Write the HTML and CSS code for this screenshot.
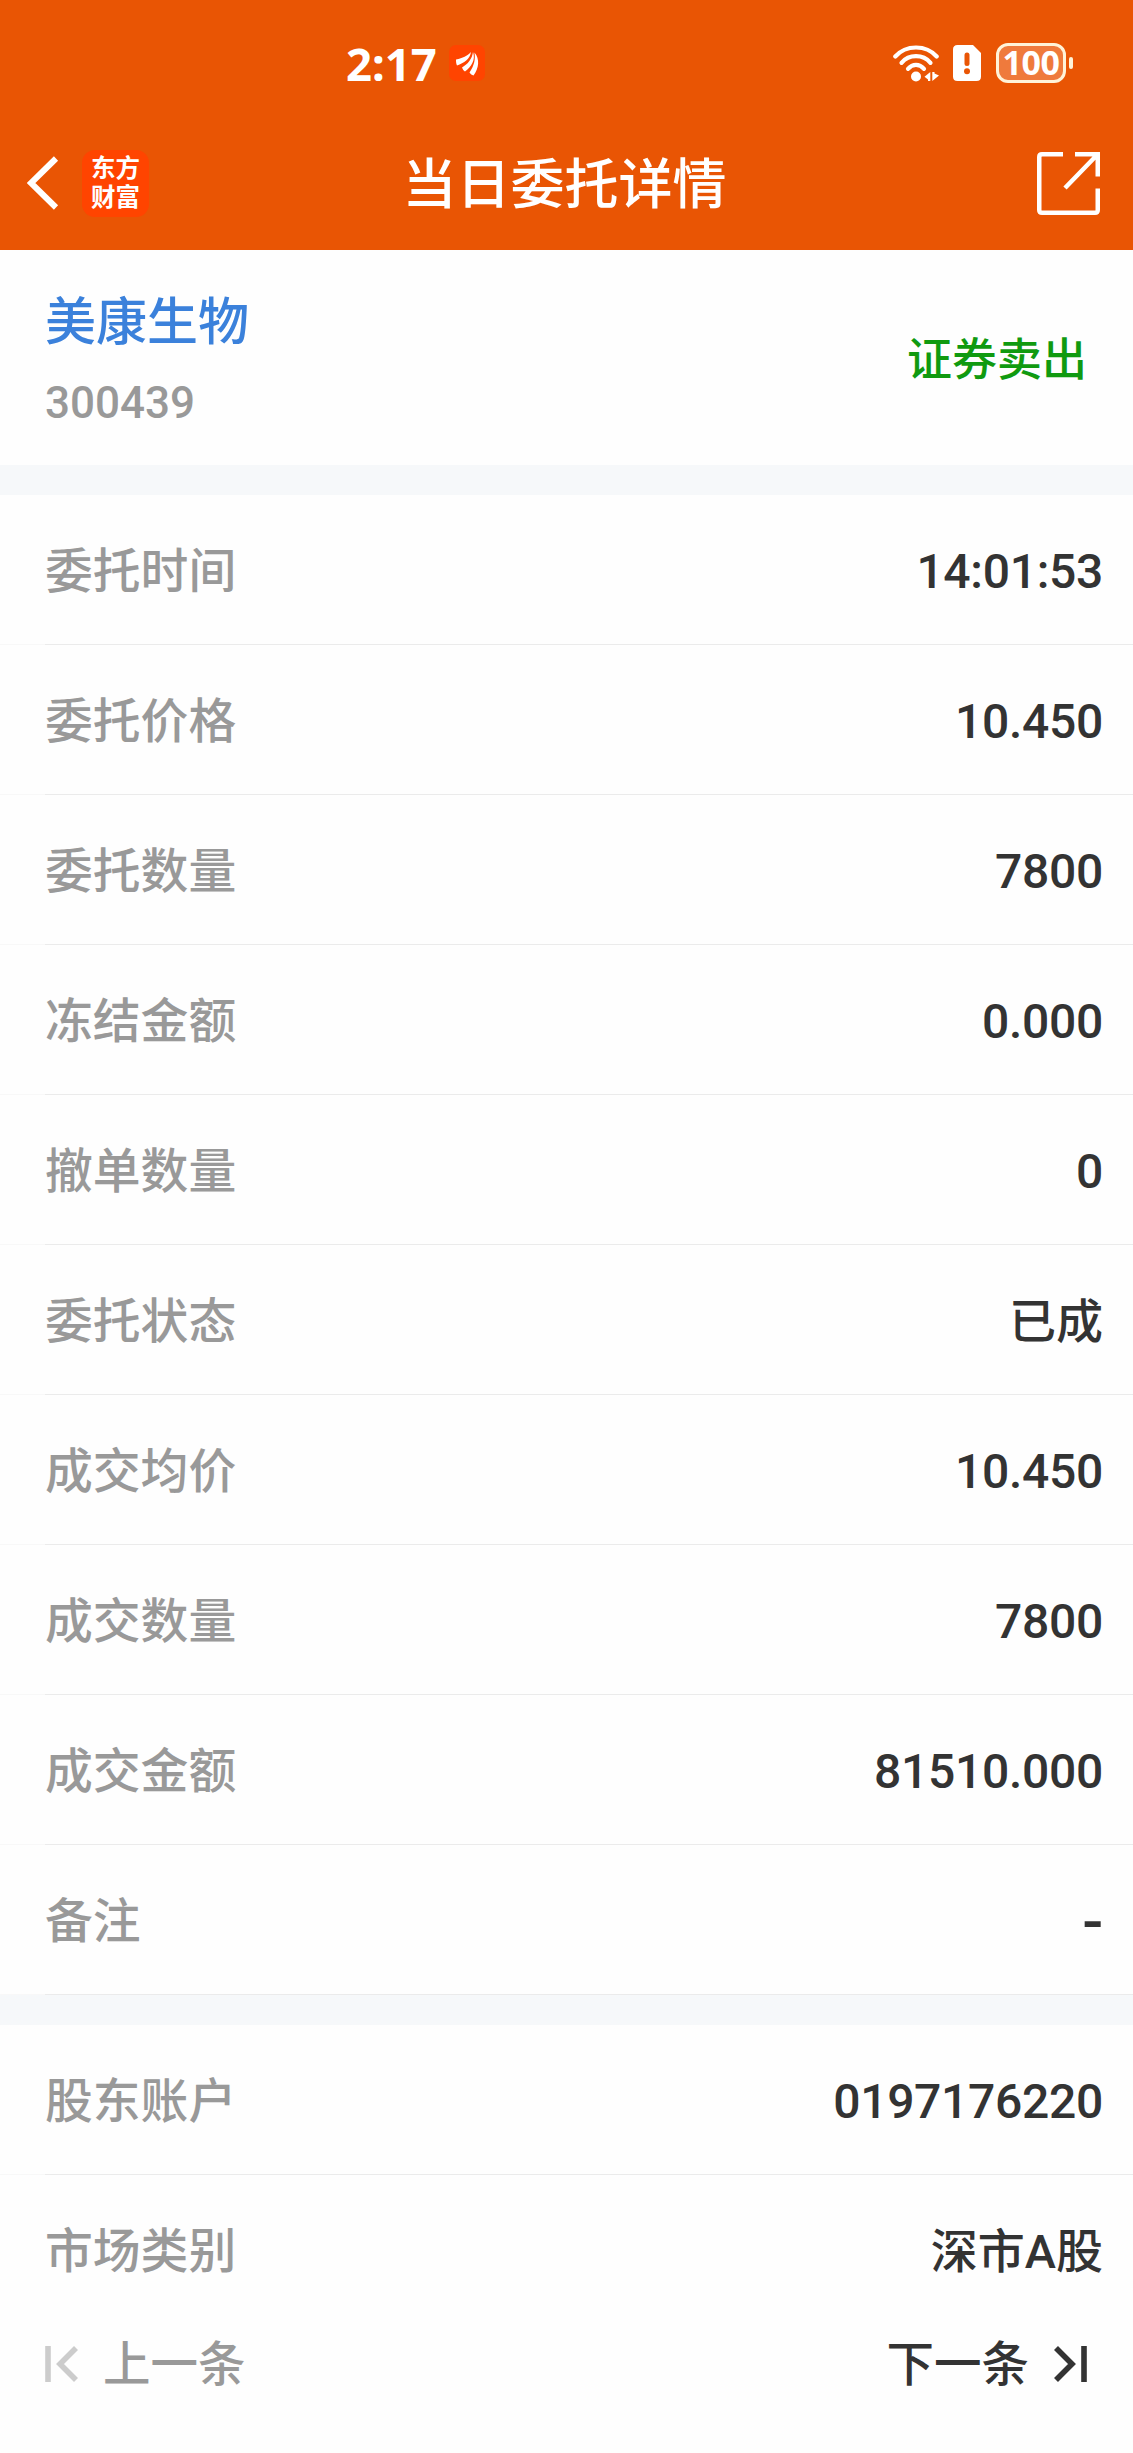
FILE: index.html
```html
<!DOCTYPE html>
<html lang="zh-CN">
<head>
    <meta charset="UTF-8">
    <meta name="viewport" content="width=device-width, initial-scale=1.0">
    <title>当日委托详情</title>
    <link rel="stylesheet" href="styles.css">
</head>
<body>
    <header class="header">
        <div class="status-bar">
            <div class="status-left">
                <span class="time">2:17</span>
                <svg class="app-icon" width="36" height="36" viewBox="0 0 36 36">
                    <rect width="36" height="36" rx="7" fill="#ff4400"/>
                    <path d="M7 14.500C14 13 18 11 22 7C21 14 15 18 8 20.500C7 18.500 7 16.500 7 14.500Z" fill="#fff"/>
                    <path d="M13 22.500C19 19 23 14 24 7C27 15 22 22 16 26.500C14.500 25.500 13.500 24 13 22.500Z" fill="#fff"/>
                    <path d="M20.500 27.500C25.500 20 26.500 14 25.500 7.500C31 14 30 23 24.500 30.500C23 30 21.500 29 20.500 27.500Z" fill="#fff"/>
                </svg>
            </div>
            <div class="status-right">
                <svg class="wifi" width="46" height="37" viewBox="0 0 46 37">
                    <g fill="none" stroke="#fff" stroke-width="4.200" stroke-linecap="round">
                        <path d="M2.300 11.500C13 -0.500 33 -0.500 43.700 11.500"/>
                        <path d="M8.500 17.800C16 9 30 9 37.500 17.800"/>
                        <path d="M15 23.800C19.500 18.500 26.500 18.500 31 23.800"/>
                    </g>
                    <circle cx="23" cy="31.500" r="5" fill="#fff"/>
                    <path d="M37.300 27V36H35V34.500L31.500 31.800ZM39.300 27H41.500V28.500L46 30.500L39.300 36Z" fill="#fff"/>
                </svg>
                <svg class="sim" width="28" height="36" viewBox="0 0 28 36">
                    <path d="M4.500 0H20L28 8V31.500Q28 36 23.500 36H4.500Q0 36 0 31.500V4.500Q0 0 4.500 0Z" fill="#fff"/>
                    <path d="M14 10V18.500" stroke="#e95504" stroke-width="5" stroke-linecap="round"/>
                    <circle cx="14" cy="26.200" r="3" fill="#e95504"/>
                </svg>
                <div class="battery">100</div>
                <div class="battery-cap"></div>
            </div>
        </div>
        <div class="nav">
            <div class="nav-left">
                <svg width="32" height="54" viewBox="0 0 32 54">
                    <path d="M29 2.500L4 27L29 51.500" fill="none" stroke="#fff" stroke-width="6"/>
                </svg>
                <div class="logo"><span>东方</span><span>财富</span></div>
            </div>
            <h1 class="title">当日委托详情</h1>
            <svg class="share" width="63" height="63" viewBox="0 0 63 63">
                <g fill="none" stroke="#fff" stroke-width="4.500">
                    <path d="M26 2.250H5Q2.250 2.250 2.250 5V58Q2.250 60.750 5 60.750H58Q60.750 60.750 60.750 58V36.500"/>
                    <path d="M38 2.250H60.750V24.500M60 3L28 36"/>
                </g>
            </svg>
        </div>
    </header>

    <section class="stock">
        <div>
            <div class="stock-name">美康生物</div>
            <div class="stock-code">300439</div>
        </div>
        <div class="side">证券卖出</div>
    </section>

    <!-- 委托信息 -->
    <section class="group">
        <div class="row"><span class="label">委托时间</span><span class="value">14:01:53</span></div>
        <div class="row"><span class="label">委托价格</span><span class="value">10.450</span></div>
        <div class="row"><span class="label">委托数量</span><span class="value">7800</span></div>
        <div class="row"><span class="label">冻结金额</span><span class="value">0.000</span></div>
        <div class="row"><span class="label">撤单数量</span><span class="value">0</span></div>
        <div class="row"><span class="label">委托状态</span><span class="value text">已成</span></div>
        <div class="row"><span class="label">成交均价</span><span class="value">10.450</span></div>
        <div class="row"><span class="label">成交数量</span><span class="value">7800</span></div>
        <div class="row"><span class="label">成交金额</span><span class="value">81510.000</span></div>
        <div class="row"><span class="label">备注</span><span class="value empty">-</span></div>
    </section>

    <!-- 账户信息 -->
    <section class="group">
        <div class="row"><span class="label">股东账户</span><span class="value">0197176220</span></div>
        <div class="row last"><span class="label">市场类别</span><span class="value text">深市A股</span></div>
    </section>

    <footer class="pager">
        <div class="prev">
            <svg width="33" height="36" viewBox="0 0 33 36">
                <path d="M3 0V36M31 2L15 18L31 34" fill="none" stroke="#ccc" stroke-width="5.600"/>
            </svg>
            <span>上一条</span>
        </div>
        <div class="next">
            <span>下一条</span>
            <svg width="33" height="36" viewBox="0 0 33 36">
                <path d="M30 0V36M2 2L18 18L2 34" fill="none" stroke="#333" stroke-width="5.600"/>
            </svg>
        </div>
    </footer>
</body>
</html>
```
FILE: styles.css
```css
* { box-sizing: border-box; }
body { margin: 0; background: #fefefe; color: #333; font-family: Roboto, "Noto Sans CJK SC", sans-serif; font-weight: 500; }
svg { display: block; flex: none; }

.header { height: 250px; background: #e95504; color: #fff; }
.status-bar { height: 126px; padding: 0 60px 0 346px; display: flex; justify-content: space-between; align-items: center; }
.status-left, .status-right { display: flex; align-items: center; }
.time { font-family: "Noto Sans", sans-serif; font-size: 45.5px; font-weight: 700; line-height: 60px; width: 103px; }
.sim { margin: 0 15px 0 14px; }
.battery { width: 70px; height: 40px; border: 3px solid #fff3d8; border-radius: 12px; background: #ef7a3c; font-family: "Noto Sans", sans-serif; font-size: 34px; font-weight: 700; line-height: 33px; letter-spacing: -0.5px; text-align: center; }
.battery-cap { width: 4px; height: 12px; margin-left: 3px; border-radius: 2px; background: #fff3d8; }

.nav { height: 114px; padding: 0 33px 0 27px; display: grid; grid-template-columns: 1fr auto 1fr; align-items: center; }
.nav-left { display: flex; align-items: center; }
.logo { width: 67px; height: 67px; margin-left: 23px; padding: 4px 0; border-radius: 13px; background: #ff4400; display: flex; flex-direction: column; align-items: center; font-size: 24.5px; font-weight: 700; line-height: 29px; }
.title { margin: 0; padding: 6px 0 0 2px; font-size: 54px; font-weight: 500; line-height: 80px; }
.share { justify-self: end; }

.stock { height: 215px; padding: 33px 46px 0 45px; display: flex; justify-content: space-between; }
.stock-name { color: #3b81db; font-size: 51px; line-height: 80px; }
.stock-code { color: #999; font-size: 44px; line-height: 80px; }
.side { color: #109a10; font-size: 45px; line-height: 156px; }

.group { border-top: 30px solid #f6f8fa; }
.row { height: 150px; padding: 4px 30px 0 45px; display: flex; justify-content: space-between; align-items: center; background: linear-gradient(to right, #f8f8f8 45px, #ebebeb 45px) bottom / 100% 1px no-repeat; }
.last { background: none; }
.label { color: #999; font-size: 47.8px; line-height: 70px; }
.value { font-size: 48px; line-height: 70px; letter-spacing: -0.3px; }
.text { font-size: 47px; letter-spacing: 0; }
.empty { font-size: 62px; line-height: 62px; }

.pager { height: 78px; padding: 0 46px 0 45px; display: flex; justify-content: space-between; align-items: center; font-size: 47.5px; line-height: 70px; }
.pager span { padding-top: 2px; }
.prev, .next { display: flex; align-items: center; gap: 25px; }
.prev { color: #999; }
```
